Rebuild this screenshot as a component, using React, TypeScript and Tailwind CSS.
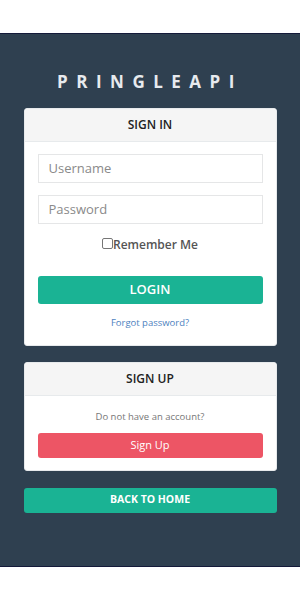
export default function App() {
  return (
    <div className="w-[300px] h-[600px] bg-white" style={{ fontFamily: '"Open Sans", sans-serif' }}>
      <div className="h-[33px]" />
      <div className="h-[534px] bg-[#2f4050] border-t border-b border-[#141a3a] flex flex-col items-center">
        <div className="mt-[36px] h-[24px] text-[17px] leading-[24px] font-bold text-[#e7eaee] tracking-[0.5em]">PRINGLEAPI</div>
        <div className="mt-[14px] w-[253px] bg-white rounded-[3px] border border-[#e7eaec] overflow-hidden">
          <div className="h-[33px] bg-[#f5f5f5] border-b border-[#e7eaec] flex items-center justify-center text-[12px] font-semibold text-[#222]">SIGN IN</div>
          <div className="px-[13px] pt-[12px] pb-[15px] flex flex-col">
            <div className="h-[29px] border border-[#e5e6e7] flex items-center px-[10px] text-[13px] text-[#8a8a8a]">Username</div>
            <div className="mt-[12px] h-[29px] border border-[#e5e6e7] flex items-center px-[10px] text-[13px] text-[#8a8a8a]">Password</div>
            <div className="mt-[12px] flex items-center justify-center text-[12px] font-semibold text-[#555]">
              <span className="inline-block w-[11px] h-[11px] border border-[#767676] rounded-[2px] bg-white -mt-[3px]" />
              <span>Remember Me</span>
            </div>
            <div className="mt-[22px] h-[28px] bg-[#1ab394] rounded-[3px] flex items-center justify-center text-white text-[13px] font-semibold">LOGIN</div>
            <div className="mt-[12px] text-center text-[9.5px] text-[#4d82c0]">Forgot password?</div>
          </div>
        </div>
        <div className="mt-[16px] w-[253px] bg-white rounded-[3px] border border-[#e7eaec] overflow-hidden">
          <div className="h-[33px] bg-[#f5f5f5] border-b border-[#e7eaec] flex items-center justify-center text-[12px] font-semibold text-[#222]">SIGN UP</div>
          <div className="px-[13px] pt-[14px] pb-[12px] flex flex-col">
            <div className="text-center text-[9.5px] text-[#777]">Do not have an account?</div>
            <div className="mt-[8px] h-[25px] bg-[#ed5565] rounded-[3px] flex items-center justify-center text-white text-[11px]">Sign Up</div>
          </div>
        </div>
        <div className="mt-[17px] w-[253px] h-[25px] bg-[#1ab394] rounded-[3px] flex items-center justify-center text-white text-[10.5px] font-bold">BACK TO HOME</div>
      </div>
    </div>
  );
}
